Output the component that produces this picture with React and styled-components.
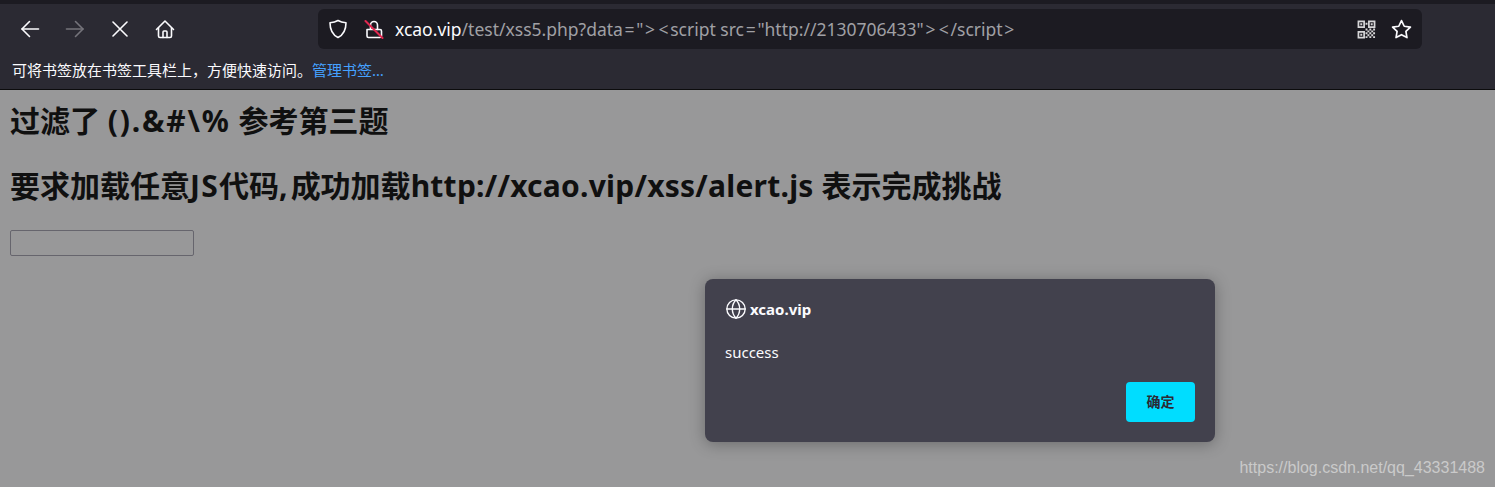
import React from 'react';
import styled, { createGlobalStyle } from 'styled-components';
import { Globe } from 'lucide-react';

const GlobalStyle = createGlobalStyle`
  html, body {
    margin: 0;
    padding: 0;
    height: 487px;
    overflow: hidden;
    background: #989899;
  }
`;

const Page = styled.div`
  position: relative;
  width: 1495px;
  height: 487px;
  overflow: hidden;
  font-family: "Noto Sans", "Noto Sans CJK SC", sans-serif;
`;

const Chrome = styled.div`
  background: #2b2a33;
  border-top: 4px solid #1c1b22;
  border-bottom: 1px solid #0c0c0d;
  height: 85px;
`;

const Toolbar = styled.div`
  display: flex;
  align-items: center;
  height: 50px;
  padding-left: 14px;
`;

const NavButton = styled.div`
  width: 31px;
  height: 31px;
  margin-right: ${props => props.gap}px;
  display: flex;
  align-items: center;
  justify-content: center;
  color: ${props => (props.disabled ? '#75747b' : '#fbfbfe')};
`;

const UrlBar = styled.div`
  display: flex;
  align-items: center;
  width: 1104px;
  height: 40px;
  margin-left: 138px;
  padding: 0 10px;
  box-sizing: border-box;
  background: #1c1b22;
  border-radius: 6px;
`;

const UrlIcon = styled.div`
  display: flex;
  align-items: center;
  color: #fbfbfe;
  margin-right: ${props => props.gap}px;
`;

const UrlText = styled.div`
  flex: 1;
  font-size: 17.500px;
  color: #a0a0a5;
  white-space: nowrap;
`;

const Domain = styled.span`
  color: #fbfbfe;
`;

const Sym = styled.span`
  margin: 0 1.700px;
`;

const BookmarkBar = styled.div`
  height: 31px;
  padding-left: 12px;
  display: flex;
  align-items: center;
  font-size: 15px;
  color: #fbfbfe;
`;

const BookmarkLink = styled.span`
  color: #45a1ff;
`;

const Content = styled.div`
  padding: 0 10px;
  color: #101010;
`;

const Heading = styled.h2`
  margin: 0;
  font-size: 30px;
  line-height: 40px;
  font-weight: 700;
  white-space: nowrap;
  padding-top: ${props => props.top}px;
`;

const Latin = styled.span`
  letter-spacing: ${props => props.spacing}px;
`;

const TextInput = styled.input`
  display: block;
  width: 184px;
  height: 26px;
  box-sizing: border-box;
  margin-top: 24px;
  background: transparent;
  border: 1px solid #66656d;
  border-radius: 2px;
`;

const Dialog = styled.div`
  position: absolute;
  left: 705px;
  top: 279px;
  width: 510px;
  height: 163px;
  box-sizing: border-box;
  padding: 19px 20px 20px;
  background: #42414d;
  border-radius: 8px;
  box-shadow: 0 2px 16px rgba(0, 0, 0, 0.3);
  color: #fbfbfe;
  display: flex;
  flex-direction: column;
`;

const DialogTitle = styled.div`
  display: flex;
  align-items: center;
  gap: 3px;
  height: 21px;
  font-size: 15px;
  font-weight: 700;
`;

const DialogMessage = styled.div`
  margin-top: 23px;
  font-size: 15px;
  line-height: 20px;
`;

const DialogFooter = styled.div`
  margin-top: auto;
  display: flex;
  justify-content: flex-end;
`;

const OkButton = styled.button`
  width: 69px;
  height: 40px;
  border: none;
  border-radius: 4px;
  background: #00ddff;
  color: #2b2a33;
  font-family: inherit;
  font-size: 14px;
  line-height: 38px;
  font-weight: 700;
  padding: 0;
`;

const Watermark = styled.div`
  position: absolute;
  right: 10px;
  bottom: 10px;
  font-family: "Liberation Sans", Arial, sans-serif;
  font-size: 16px;
  color: #cacaca;
`;

const Stroke = styled.svg`
  display: block;
  fill: none;
  stroke: currentColor;
  stroke-width: ${props => props.$weight || 1.6};
  stroke-linecap: round;
  stroke-linejoin: round;
`;

const ArrowIcon = ({ flip }) => (
  <Stroke width="20" height="20" viewBox="0 0 20 20" style={flip ? { transform: 'scaleX(-1)' } : undefined}>
    <path d="M18.500 10H2" />
    <path d="M9.500 2.500 2 10l7.500 7.500" />
  </Stroke>
);

const App = () => (
  <Page>
    <GlobalStyle />
    <Chrome>
      <Toolbar>
        <NavButton gap={14}><ArrowIcon /></NavButton>
        <NavButton gap={14} disabled><ArrowIcon flip /></NavButton>
        <NavButton gap={14}>
          <Stroke width="16" height="16" viewBox="0 0 16 16"><path d="M1 1l14 14M15 1 1 15" /></Stroke>
        </NavButton>
        <NavButton gap={0}>
          <Stroke width="20" height="20" viewBox="0 0 20 20">
            <path d="M1.500 10.500 10 2l8.500 8.500" />
            <path d="M3.500 9v8a1.500 1.500 0 0 0 1.500 1.500h10a1.500 1.500 0 0 0 1.500-1.500V9" />
            <path d="M8 18.500V13a1 1 0 0 1 1-1h2a1 1 0 0 1 1 1v5.500" />
          </Stroke>
        </NavButton>
        <UrlBar>
          <UrlIcon gap={16}>
            <Stroke width="20" height="20" viewBox="0 0 20 20">
              <path d="M10 1.500c2.500 1.500 5 2 8 2.200 0 6.500-1.500 11.500-8 14.800C3.500 15.200 2 10.200 2 3.700c3-.2 5.500-.7 8-2.200z" />
            </Stroke>
          </UrlIcon>
          <UrlIcon gap={11}>
            <Stroke width="20" height="20" viewBox="0 0 20 20">
              <path d="M3 10.500h13a1.500 1.500 0 0 1 1.500 1.500v5a1.500 1.500 0 0 1-1.500 1.500H4.500A1.500 1.500 0 0 1 3 17z" />
              <path d="M6.500 10V6a3.500 3.500 0 0 1 7 0v4.500" />
              <path d="M1.500 2l17 17" stroke="#e22850" strokeWidth="2" />
            </Stroke>
          </UrlIcon>
          <UrlText>
            <Domain>xcao.vip</Domain>/test/xss5.php?data<Sym>=</Sym>"<Sym>&gt;</Sym><Sym>&lt;</Sym>script src<Sym>=</Sym>"http://2130706433"<Sym>&gt;</Sym><Sym>&lt;</Sym>/script<Sym>&gt;</Sym>
          </UrlText>
          <UrlIcon gap={15}>
            <Stroke width="19" height="19" viewBox="0 0 20 20" $weight={1.800}>
              <path d="M1.500 1.500h6v6h-6zM12.500 1.500h6v6h-6zM1.500 12.500h6v6h-6z" stroke="#d6d6d8" strokeLinejoin="miter" />
              <path d="M3.500 3.500h2v2h-2zM14.500 3.500h2v2h-2zM3.500 14.500h2v2h-2z" fill="#d6d6d8" stroke="none" />
              <path d="M9 3h2v2H9zM9 9h2v2H9zM11 11h2v2h-2zM13 9h2v2h-2zM15 11h2v2h-2zM17 9h2v2h-2zM9 13h2v2H9zM13 13h2v2h-2zM17 13h2v2h-2zM11 15h2v2h-2zM15 15h2v2h-2zM9 17h2v2H9zM13 17h2v2h-2zM17 17h2v2h-2z" fill="#d6d6d8" stroke="none" />
            </Stroke>
          </UrlIcon>
          <UrlIcon gap={0}>
            <Stroke width="21" height="21" viewBox="0 0 20 20">
              <path d="M10 1.500l2.600 5.400 5.900.8-4.300 4.100 1 5.900L10 14.900l-5.200 2.800 1-5.900L1.500 7.700l5.900-.8z" />
            </Stroke>
          </UrlIcon>
        </UrlBar>
      </Toolbar>
      <BookmarkBar>
        可将书签放在书签工具栏上，方便快速访问。<BookmarkLink>管理书签…</BookmarkLink>
      </BookmarkBar>
    </Chrome>
    <Content>
      <Heading top={11}>过滤了 <Latin spacing={1.800}>().&amp;#\%</Latin> 参考第三题</Heading>
      <Heading top={25}>要求加载任意<Latin spacing={1.300}>JS</Latin>代码<Latin spacing={3}>,</Latin>成功加载<Latin spacing={0.240}>http://xcao.vip/xss/alert.js</Latin> 表示完成挑战</Heading>
      <TextInput />
    </Content>
    <Dialog>
      <DialogTitle>
        <Globe size={22} strokeWidth={1.500} />
        xcao.vip
      </DialogTitle>
      <DialogMessage>success</DialogMessage>
      <DialogFooter>
        <OkButton>确定</OkButton>
      </DialogFooter>
    </Dialog>
    <Watermark>https://blog.csdn.net/qq_43331488</Watermark>
  </Page>
);

export default App;
